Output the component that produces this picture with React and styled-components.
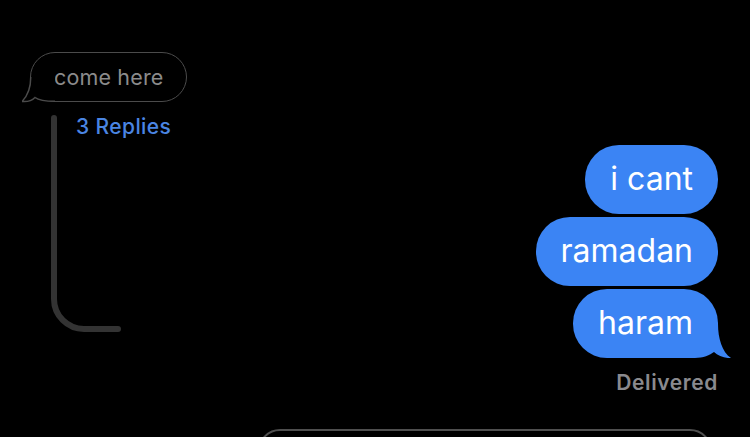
import React from 'react';
import styled, { createGlobalStyle } from 'styled-components';

const GlobalStyle = createGlobalStyle`
    html, body {
        margin: 0;
        padding: 0;
        background: #000;
        overflow: hidden;
    }
    body {
        font-family: Inter, "Noto Sans", "Liberation Sans", sans-serif;
    }
`

const Page = styled.div`
    width: 750px;
    height: 437px;
    padding-top: 52px;
    box-sizing: border-box;
    overflow: hidden;
    background: #000;
`

const Conversation = styled.div`
    display: grid;
    grid-template-columns: 1fr auto;
    padding: 0 32px 0 30px;
`

const ThreadColumn = styled.div`
    display: flex;
    flex-direction: column;
    align-items: flex-start;
`

const IncomingBubble = styled.div`
    position: relative;
    height: 50px;
    box-sizing: border-box;
    padding: 0 23px 0 23px;
    border: 1.5px solid #4b4b4b;
    border-radius: 25px;
    display: flex;
    align-items: center;
    font-size: 21.5px;
    letter-spacing: 0.15px;
    color: #8b8b8b;
    svg {
        position: absolute;
        left: -9.5px;
        bottom: -1.5px;
    }
`

const ThreadRow = styled.div`
    display: grid;
    grid-template-columns: 25px auto;
    margin: 13px 0 0 21px;
    svg {
        grid-column: 1 / span 2;
        grid-row: 1;
    }
`

const ReplyLink = styled.span`
    grid-column: 2;
    grid-row: 1;
    align-self: start;
    font-size: 21px;
    line-height: 24px;
    font-weight: 500;
    letter-spacing: 0.4px;
    color: #4a85e3;
`

const OutgoingColumn = styled.div`
    display: flex;
    flex-direction: column;
    align-items: flex-end;
    gap: 3.5px;
    margin-top: 93px;
`

const OutgoingBubble = styled.div`
    position: relative;
    padding: 15px 25px;
    border-radius: 34px;
    background: #3b84f4;
    color: #fff;
    font-size: 32px;
    line-height: 38.5px;
    svg {
        position: absolute;
        right: -13px;
        bottom: 0;
    }
`

const BubbleText = styled.span`
    position: relative;
    z-index: 1;
`

const Status = styled.span`
    margin-top: 10px;
    font-size: 21px;
    line-height: 24px;
    font-weight: 600;
    letter-spacing: 0.6px;
    color: #8a8a8e;
`

const Composer = styled.div`
    margin: 34px 0 0 258px;
    width: 454px;
    height: 44px;
    box-sizing: border-box;
    border: 2px solid #4f4f4f;
    border-radius: 24px;
`

const IncomingTail = () => (
    <svg width="33" height="26" viewBox="0 0 33 26">
        <path d="M8.75 0 C8.75 10 5.5 19 0 24.5 C5 25 10 23.5 13 20.5 C17 23.5 23 24.25 33 24.25 L33 0 Z" fill="#000" />
        <path d="M8.75 0 C8.75 10 5.5 19 0 24.5 C5 25 10 23.5 13 20.5 C17 23.5 23 24.25 33 24.25" fill="none" stroke="#4b4b4b" strokeWidth="1.5" />
    </svg>
)

// covers the bubble's bottom-right corner and adds the tail
const OutgoingTail = () => (
    <svg width="52" height="34" viewBox="0 0 52 34">
        <path d="M0 34 L0 0 L39 0 C39 14 43 28 52 34 C46 34.5 39 32 35 28 C31 31 24 34 16 34 Z" fill="#3b84f4" />
    </svg>
)

const ThreadLine = () => (
    <svg width="70" height="217" viewBox="0 0 70 217">
        <path d="M3 3 L3 184 A30 30 0 0 0 33 214 L67 214" fill="none" stroke="#333" strokeWidth="6" strokeLinecap="round" />
    </svg>
)

const messages = ['i cant', 'ramadan', 'haram'];

const App = () => {
    return (
        <Page>
            <GlobalStyle />
            <Conversation>
                <ThreadColumn>
                    <IncomingBubble>
                        come here
                        <IncomingTail />
                    </IncomingBubble>
                    <ThreadRow>
                        <ThreadLine />
                        <ReplyLink>3 Replies</ReplyLink>
                    </ThreadRow>
                </ThreadColumn>
                <OutgoingColumn>
                    {messages.map((text, i) => (
                        <OutgoingBubble key={text}>
                            <BubbleText>{text}</BubbleText>
                            {i === messages.length - 1 && <OutgoingTail />}
                        </OutgoingBubble>
                    ))}
                    <Status>Delivered</Status>
                </OutgoingColumn>
            </Conversation>
            <Composer />
        </Page>
    )
}

export default App;
